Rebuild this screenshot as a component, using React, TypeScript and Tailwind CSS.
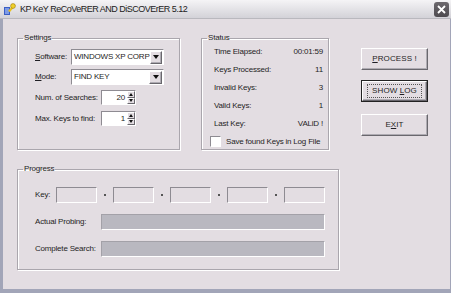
import React from "react";

const sunken = "border border-t-[#8e8b92] border-l-[#8e8b92] border-b-white border-r-white";
const raised =
  "border border-t-white border-l-white border-b-[#69676d] border-r-[#69676d] shadow-[inset_-1px_-1px_0_#aeabb2]";
const small = "text-[8px] leading-none tracking-[-0.2px] whitespace-nowrap";

function AppIcon() {
  return (
    <svg width="13" height="14" viewBox="0 0 13 14">
      <rect x="1" y="5" width="6" height="8" fill="#3b5fc4" />
      <rect x="2" y="6" width="4" height="6" fill="#7d9ae6" />
      <path d="M5 9 L11 2 L12.5 3.5 L7 10 Z" fill="#e9c21c" />
      <circle cx="10" cy="4" r="2.4" fill="#f1d02a" stroke="#9a7a10" strokeWidth="0.6" />
    </svg>
  );
}

function CloseButton() {
  return (
    <div className="w-[15px] h-[15px] rounded-[3px] bg-gradient-to-b from-[#6c686d] to-[#4e4b50] flex items-center justify-center">
      <svg width="9" height="9" viewBox="0 0 9 9">
        <path d="M1 1 L8 8 M8 1 L1 8" stroke="#fff" strokeWidth="1.8" />
      </svg>
    </div>
  );
}

function Arrow({ up = false, size = 5 }: { up?: boolean; size?: number }) {
  return (
    <svg width={size + 2} height={size / 2 + 1} viewBox={`0 0 ${size + 2} ${size / 2 + 1}`}>
      <path
        d={up ? `M1 ${size / 2 + 1} L${size / 2 + 1} 0 L${size + 1} ${size / 2 + 1} Z` : `M1 0 L${size + 1} 0 L${size / 2 + 1} ${size / 2 + 1} Z`}
        fill="#111"
      />
    </svg>
  );
}

function Combo({ value }: { value: string }) {
  return (
    <div className={`w-[93px] h-[16px] bg-white flex items-center ${sunken}`}>
      <span className={`flex-1 pl-[2px] ${small}`}>{value}</span>
      <div className={`w-[13px] h-[13px] mr-[1px] bg-[#e3dde2] flex items-center justify-center ${raised}`}>
        <Arrow size={6} />
      </div>
    </div>
  );
}

function Spinner({ value }: { value: string }) {
  return (
    <div className={`w-[35px] h-[15px] bg-white flex items-center ${sunken}`}>
      <span className={`flex-1 text-right pr-[2px] ${small}`}>{value}</span>
      <div className="w-[8px] h-full flex flex-col">
        <div className={`flex-1 bg-[#e3dde2] flex items-center justify-center ${raised} shadow-none`}>
          <Arrow up size={4} />
        </div>
        <div className={`flex-1 bg-[#e3dde2] flex items-center justify-center ${raised} shadow-none`}>
          <Arrow size={4} />
        </div>
      </div>
    </div>
  );
}

function Group({ title, className, children }: { title: string; className: string; children: React.ReactNode }) {
  return (
    <fieldset className={`border border-[#aaa6ad] shadow-[inset_1px_1px_0_#fff,1px_1px_0_#fff] p-0 m-0 ${className}`}>
      <legend className={`ml-[5px] px-[1px] leading-[10px] ${small}`}>{title}</legend>
      {children}
    </fieldset>
  );
}

function Label({ children, w }: { children: React.ReactNode; w: string }) {
  return <span className={`${w} shrink-0 ${small}`}>{children}</span>;
}

function Settings() {
  return (
    <Group title="Settings" className="w-[163px] h-[116px]">
      <div className="pl-[17px] pt-[7px] flex flex-col gap-[4px]">
        <div className="flex items-center">
          <Label w="w-[36px]">
            <u>S</u>oftware:
          </Label>
          <Combo value="WINDOWS XP CORP" />
        </div>
        <div className="flex items-center">
          <Label w="w-[36px]">
            <u>M</u>ode:
          </Label>
          <Combo value="FIND KEY" />
        </div>
        <div className="flex items-center mt-[1px]">
          <Label w="w-[66px]">Num. of Searches:</Label>
          <Spinner value="20" />
        </div>
        <div className="flex items-center mt-[2px]">
          <Label w="w-[66px]">Max. Keys to find:</Label>
          <Spinner value="1" />
        </div>
      </div>
    </Group>
  );
}

const statusRows: [string, string][] = [
  ["Time Elapsed:", "00:01:59"],
  ["Keys Processed:", "11"],
  ["Invalid Keys:", "3"],
  ["Valid Keys:", "1"],
  ["Last Key:", "VALiD !"],
];

function Status() {
  return (
    <Group title="Status" className="ml-[21px] w-[128px] h-[116px]">
      <div className="pl-[12px] pr-[5px] pt-[1px] flex flex-col">
        {statusRows.map(([k, v]) => (
          <div key={k} className={`h-[18px] flex items-center justify-between ${small}`}>
            <span>{k}</span>
            <span>{v}</span>
          </div>
        ))}
        <div className="flex items-center mt-[3px] -ml-[4px]">
          <div className={`w-[11px] h-[11px] bg-white ${sunken}`} />
          <span className={`ml-[5px] ${small}`}>Save found Keys in Log File</span>
        </div>
      </div>
    </Group>
  );
}

function Btn({ children, def = false }: { children: React.ReactNode; def?: boolean }) {
  const inner = (
    <div className={`w-full h-full flex items-center justify-center bg-[#e3dde2] text-[8px] leading-none tracking-[0.1px] whitespace-nowrap ${raised}`}>
      {def ? <span className="px-[2px] outline outline-1 outline-dotted outline-[#555] outline-offset-2">{children}</span> : children}
    </div>
  );
  return def ? <div className="w-[67px] h-[22px] border border-[#222]">{inner}</div> : <div className="w-[67px] h-[22px]">{inner}</div>;
}

function Buttons() {
  return (
    <div className="ml-[32px] mt-[14px] flex flex-col">
      <Btn>
        <span>
          <u>P</u>ROCESS !
        </span>
      </Btn>
      <div className="mt-[10px]">
        <Btn def>
          <span>
            SHOW <u>L</u>OG
          </span>
        </Btn>
      </div>
      <div className="mt-[12px]">
        <Btn>
          <span>
            E<u>X</u>IT
          </span>
        </Btn>
      </div>
    </div>
  );
}

function Progress() {
  return (
    <Group title="Progress" className="mt-[15px] w-[322px] h-[105px]">
      <div className="pl-[17px] pt-[14px] flex flex-col gap-[11px]">
        <div className="flex items-center">
          <Label w="w-[21px]">Key:</Label>
          {[0, 1, 2, 3, 4].map((i) => (
            <React.Fragment key={i}>
              {i > 0 && (
                <div className="w-[16px] flex justify-center">
                  <div className="w-[2px] h-[2px] bg-[#555]" />
                </div>
              )}
              <div className={`w-[41px] h-[16px] bg-[#e3dde2] ${sunken}`} />
            </React.Fragment>
          ))}
        </div>
        <div className="flex items-center">
          <Label w="w-[66px]">Actual Probing:</Label>
          <div className={`w-[224px] h-[16px] bg-[#b9b8c0] ${sunken} border-t-[#a3a1a8] border-l-[#a3a1a8]`} />
        </div>
        <div className="flex items-center">
          <Label w="w-[66px]">Complete Search:</Label>
          <div className={`w-[224px] h-[16px] bg-[#b9b8c0] ${sunken} border-t-[#a3a1a8] border-l-[#a3a1a8]`} />
        </div>
      </div>
    </Group>
  );
}

export default function App() {
  return (
    <div className="w-[451px] h-[293px] flex flex-col bg-[#e3dde2] font-['Liberation_Sans',Arial,sans-serif] text-[#1f1e24] overflow-hidden">
      <div className="h-[19px] shrink-0 flex items-center bg-gradient-to-b from-[#f5f4f6] to-[#d3d2d8] border-b border-[#b9b8be] pl-[3px] pr-[2px]">
        <AppIcon />
        <span className="ml-[4px] text-[9px] leading-none tracking-[-0.5px] text-[#1c1b20] whitespace-nowrap">KP KeY ReCoVeRER AND DiSCOVErER 5.12</span>
        <div className="ml-auto">
          <CloseButton />
        </div>
      </div>
      <div className="flex-1 flex flex-col border-l-[3px] border-b-[4px] border-r border-[#a2a5b8] pl-[14px] pt-[15px]">
        <div className="flex items-start">
          <Settings />
          <Status />
          <Buttons />
        </div>
        <Progress />
      </div>
    </div>
  );
}
